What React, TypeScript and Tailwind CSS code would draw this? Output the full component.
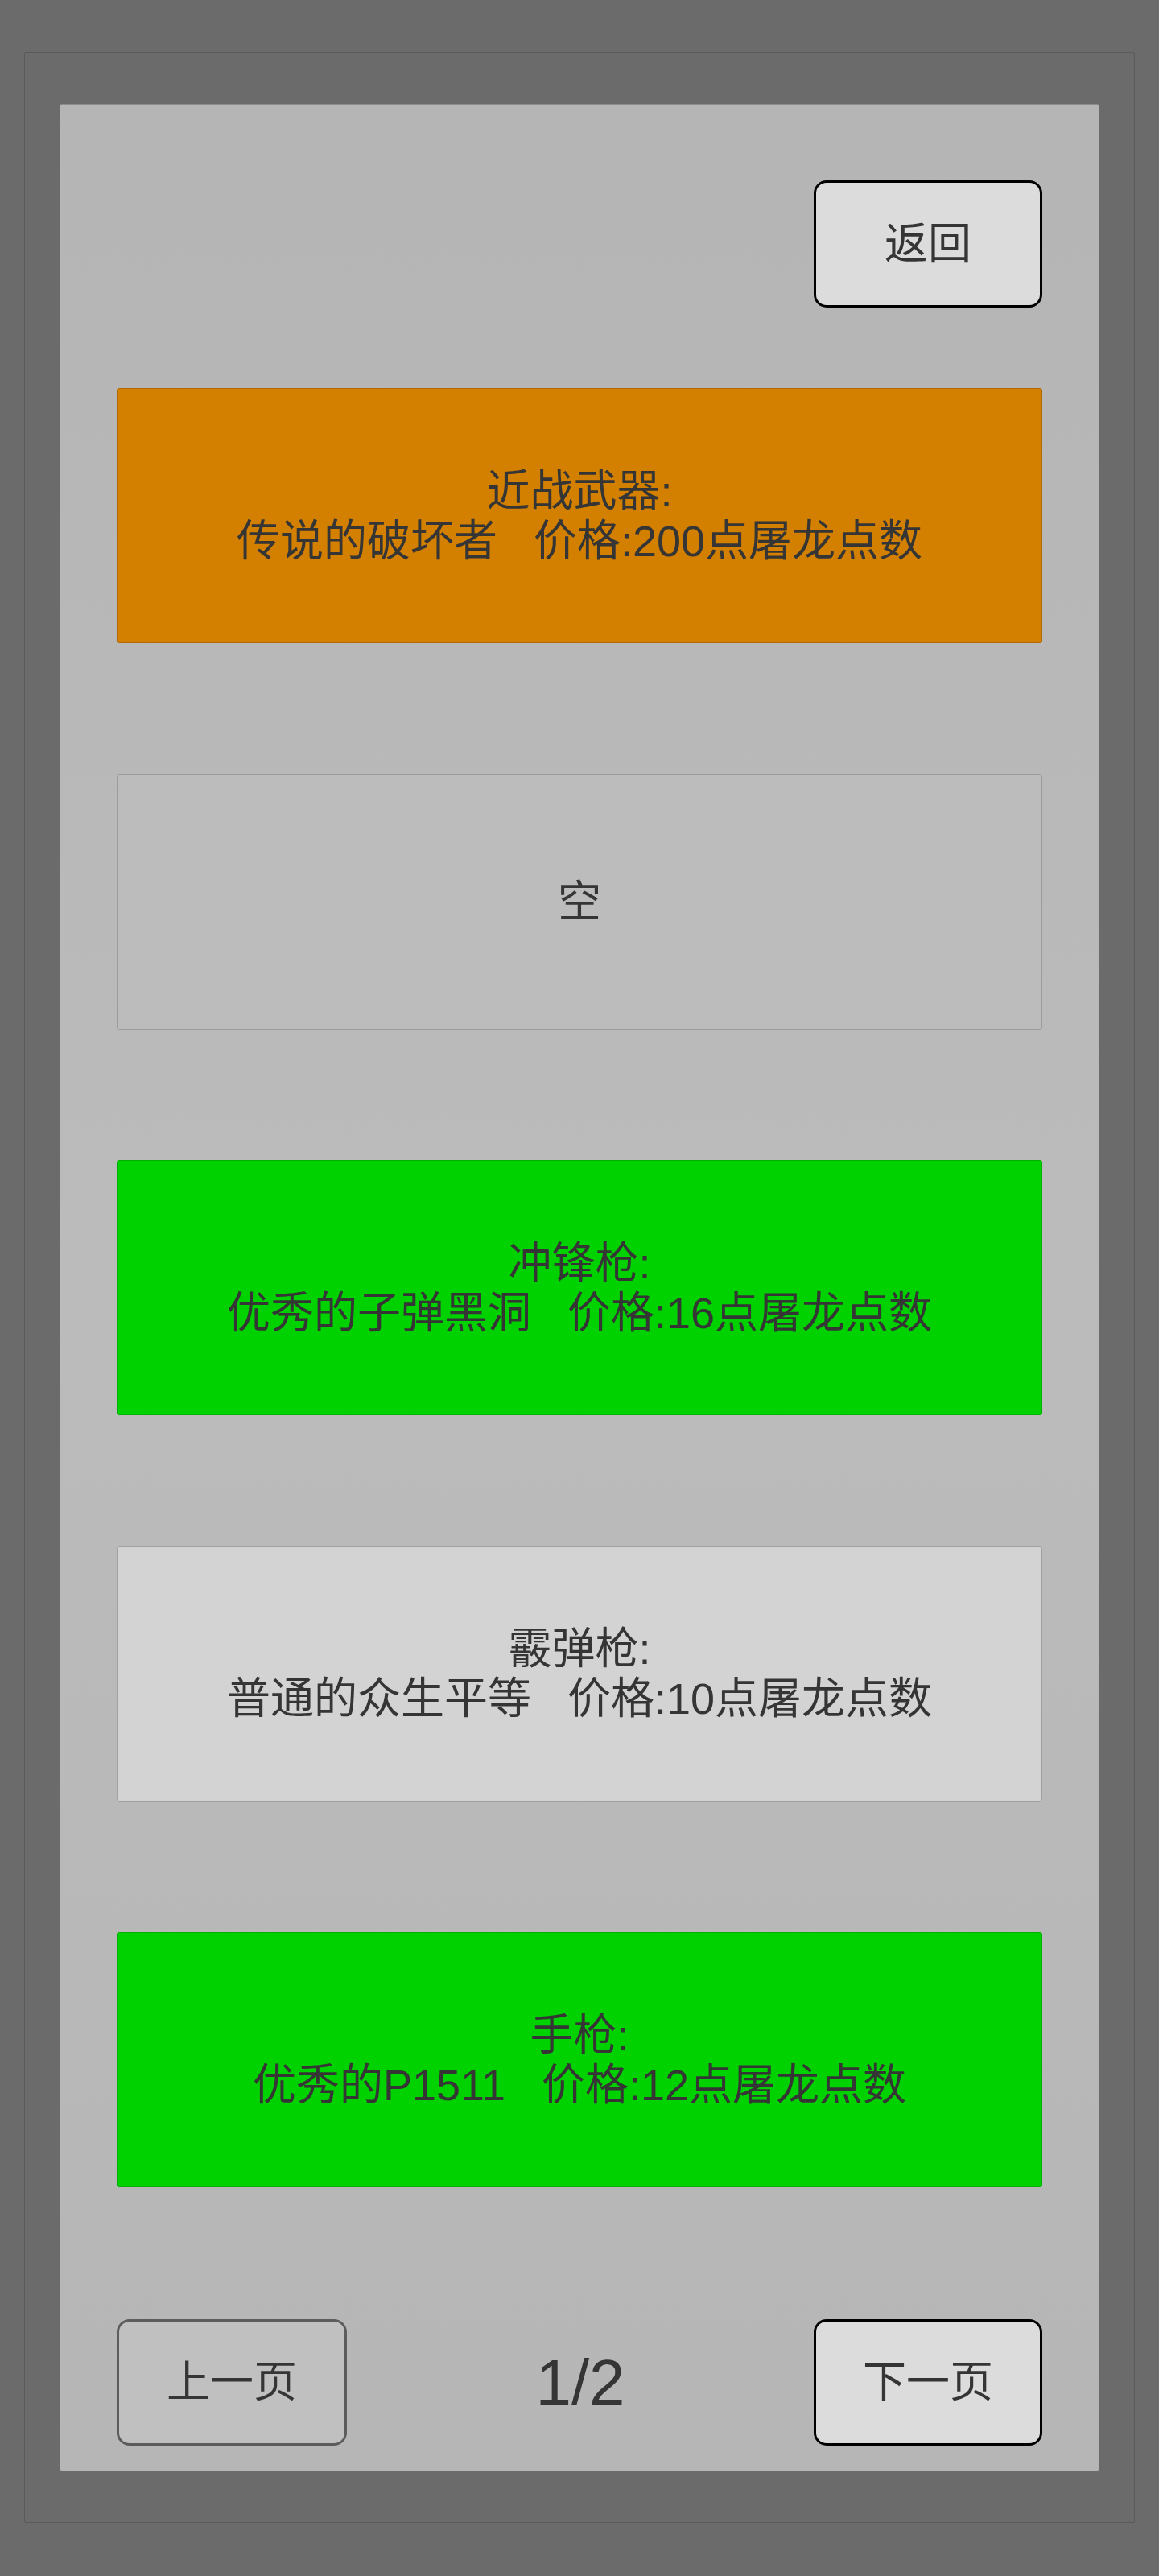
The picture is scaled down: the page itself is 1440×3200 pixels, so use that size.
type Item = {
  kind: "orange" | "empty" | "green" | "grey";
  title?: string;
  line?: string;
};

const items: Item[] = [
  { kind: "orange", title: "近战武器:", line: "传说的破坏者   价格:200点屠龙点数" },
  { kind: "empty" },
  { kind: "green", title: "冲锋枪:", line: "优秀的子弹黑洞   价格:16点屠龙点数" },
  { kind: "grey", title: "霰弹枪:", line: "普通的众生平等   价格:10点屠龙点数" },
  { kind: "green", title: "手枪:", line: "优秀的P1511   价格:12点屠龙点数" },
];

const cardStyles: Record<Item["kind"], string> = {
  orange: "bg-[#d38000] border-[#b06a00]",
  empty: "bg-[#bcbcbc] border-[#9c9c9c]",
  green: "bg-[#00d200] border-[#00b000]",
  grey: "bg-[#d3d3d3] border-[#a0a0a0]",
};

function ShopCard({ item }: { item: Item }) {
  return (
    <button
      className={`flex h-[317px] w-full flex-col items-center justify-center rounded-[3px] border text-[54px] leading-[62px] text-[#353535] ${cardStyles[item.kind]}`}
    >
      {item.kind === "empty" ? (
        <span>空</span>
      ) : (
        <>
          <span className="whitespace-pre">{item.title}</span>
          <span className="whitespace-pre">{item.line}</span>
        </>
      )}
    </button>
  );
}

export default function App() {
  return (
    <div className="min-h-[3200px] bg-[#6b6b6b] pt-[65px] font-['Liberation_Sans','Noto_Sans_CJK_SC',sans-serif]">
      <div className="ml-[30px] w-[1380px] rounded-[2px] border border-[#5a5a5a] px-[43px] py-[63px]">
        <div className="flex flex-col rounded-[3px] border border-[#8e8e8e] bg-linear-to-b from-[#b5b5b5] via-[#bbbbbb] to-[#b6b6b6] px-[70px] pt-[94px] pb-[31px]">
          <div className="flex justify-end">
            <button className="flex h-[158px] w-[284px] items-center justify-center rounded-[16px] border-[3px] border-black bg-[#dcdcdc] text-[54px] text-[#353535]">
              返回
            </button>
          </div>

          <div className="mt-[100px] flex flex-col gap-[162.5px]">
            {items.map((item, i) => (
              <ShopCard key={i} item={item} />
            ))}
          </div>

          <div className="mt-[164px] flex items-center justify-between">
            <button className="flex h-[157px] w-[286px] items-center justify-center rounded-[16px] border-[3px] border-[#5c5c5c] bg-[#c0c0c0] text-[54px] text-[#353535]">
              上一页
            </button>
            <span className="text-[80px] leading-none text-[#353535]">1/2</span>
            <button className="flex h-[157px] w-[284px] items-center justify-center rounded-[16px] border-[3px] border-black bg-[#dcdcdc] text-[54px] text-[#353535]">
              下一页
            </button>
          </div>
        </div>
      </div>
    </div>
  );
}
